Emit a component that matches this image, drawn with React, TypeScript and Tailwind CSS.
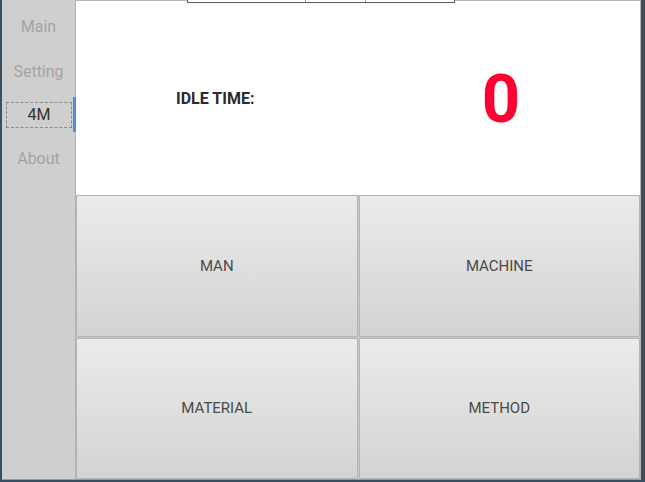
import React from "react";

const font = { fontFamily: "Roboto, 'Noto Sans', 'Liberation Sans', sans-serif" };

function Btn({ label }: { label: string }) {
  return (
    <div className="flex items-center justify-center rounded-[2px] border border-[#b4b4b0] bg-gradient-to-b from-[#ebebeb] to-[#d3d3d1] text-[15px] text-[#4a4a4a]">
      {label}
    </div>
  );
}

export default function App() {
  return (
    <div className="w-[645px] h-[482px] bg-[#3c4f5e] overflow-hidden" style={font}>
      <div className="ml-[2px] w-[639px] h-[480px] flex border-b border-[#9a9a98] border-r border-r-[#b8b8b4]">
        {/* sidebar */}
        <div className="w-[74px] bg-[#cfcfcf] flex flex-col border-r border-[#b2b2b0] relative">
          <div className="h-[54px] flex items-center justify-center text-[16px] text-[#a3a3a3]">Main</div>
          <div className="h-[36px] flex items-center justify-center text-[16px] text-[#a3a3a3]">Setting</div>
          <div className="h-[50px] flex items-start pt-[12px] relative">
            <div className="ml-[4px] w-[66px] h-[26px] border border-dashed border-[#8a8a8a] flex items-center justify-center text-[16px] text-[#333]">4M</div>
            <div className="absolute right-[-1px] top-[7px] w-[3px] h-[35px] bg-[#4a90e2]" />
          </div>
          <div className="h-[38px] flex items-center justify-center text-[16px] text-[#a3a3a3]">About</div>
        </div>
        {/* content */}
        <div className="flex-1 flex flex-col bg-white">
          <div className="h-[195px] flex flex-col border-t border-[#b8b8b0] relative">
            <div className="absolute left-[111px] top-[-1px] w-[268px] h-[3px] border border-t-0 border-[#5a5a5a] bg-white flex">
              <div className="w-[118px] border-r border-[#9a9a9a]" />
              <div className="w-[60px] border-r border-[#9a9a9a]" />
            </div>
            <div className="flex-1 flex items-center">
              <div className="w-[306px] pl-[100px] pt-[2px] text-[16px] font-bold text-[#2a2a2a]">IDLE TIME:</div>
              <div className="flex-1 text-center text-[#ff0033] font-bold text-[67px] leading-none pr-[20px] mt-[2px]">0</div>
            </div>
          </div>
          <div className="flex-1 grid grid-cols-2 grid-rows-2 gap-x-[1px] gap-y-[1px] bg-[#c8c8c6]">
            <Btn label="MAN" />
            <Btn label="MACHINE" />
            <Btn label="MATERIAL" />
            <Btn label="METHOD" />
          </div>
        </div>
      </div>
    </div>
  );
}
